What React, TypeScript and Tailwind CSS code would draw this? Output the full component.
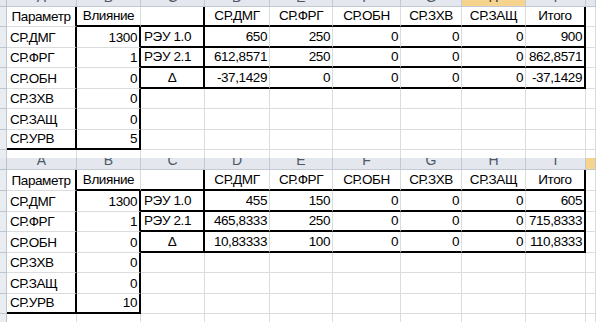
import React from "react";

type Cell = {
  text?: string;
  align?: "left" | "right" | "center";
  r?: boolean; // thick right edge
  b?: boolean; // thick bottom edge
};

type Row = { h: string; cells: Cell[] };

const COLS = "grid-cols-[7px_70px_64px_64px_65px_63px_68px_61px_64px_60px_1fr]";
const LETTERS = ["A", "B", "C", "D", "E", "F", "G", "H", "I", "J"];

const buildRows = (
  influence: string[],
  results: string[][],
  heights: string[]
): Row[] => {
  const params = ["СР.ДМГ", "СР.ФРГ", "СР.ОБН", "СР.ЗХВ", "СР.ЗАЩ", "СР.УРВ"];
  const labels = ["РЭУ 1.0", "РЭУ 2.1", "Δ"];
  const heads = ["СР.ДМГ", "СР.ФРГ", "СР.ОБН", "СР.ЗХВ", "СР.ЗАЩ", "Итого"];

  const rows: Row[] = [];
  rows.push({
    h: heights[0],
    cells: [
      { text: "Параметр", align: "center", r: true },
      { text: "Влияние", align: "center", b: true },
      { r: true, b: true },
      ...heads.map((t, i) => ({ text: t, align: "center" as const, b: true, r: i === 5 })),
      {},
    ],
  });

  params.forEach((p, i) => {
    const last = i === params.length - 1;
    const cells: Cell[] = [
      { text: p, align: "left", r: true, b: last },
      { text: influence[i], align: "right", r: true, b: last },
    ];
    if (i < 3) {
      cells.push({ text: labels[i], align: i === 2 ? "center" : "left", r: true, b: true });
      results[i].forEach((v, j) =>
        cells.push({ text: v, align: "right", b: true, r: j === 5 })
      );
    } else {
      for (let j = 0; j < 7; j++) cells.push({});
    }
    cells.push({});
    rows.push({ h: heights[i + 1], cells });
  });

  return rows;
};

const alignCls = {
  left: "justify-start pl-[3px]",
  right: "justify-end pr-[2px]",
  center: "justify-center",
};

const GridCell = ({ cell }: { cell: Cell }) => (
  <div
    className={`flex items-end pb-[3px] overflow-visible whitespace-nowrap border-[#dadcdd] border-r border-b ${
      cell.r ? "border-r-2 border-r-black" : ""
    } ${cell.b ? "border-b-2 border-b-black" : ""} ${alignCls[cell.align ?? "left"]}`}
  >
    {cell.text}
  </div>
);

const HeaderStrip = ({ visible, offset, selected }: { visible: string; offset: string; selected: string }) => (
  <div className={`${visible} overflow-hidden`}>
    <div className={`grid ${COLS} h-[20px] ${offset}`}>
      <div className="bg-[#e4e8ee] border-r border-b border-[#b9c0ca]" />
      {LETTERS.map((l) => (
        <div
          key={l}
          className={`flex items-center justify-center text-[14px] tracking-normal border-r border-b border-[#c3c9d2] ${
            l === selected ? "bg-[#f7d48e] text-[#3c3c3c]" : "bg-[#e4e8ee] text-[#4d5866]"
          }`}
        >
          {l === "J" ? "" : l}
        </div>
      ))}
    </div>
  </div>
);

const Sheet = ({ rows, tail }: { rows: Row[]; tail: string }) => (
  <div>
    {rows.map((row, ri) => (
      <div key={ri} className={`grid ${COLS} ${row.h}`}>
        <div className="bg-[#e9ecf1] border-r border-b border-[#bfc6d0]" />
        {row.cells.map((c, ci) => (
          <GridCell key={ci} cell={c} />
        ))}
      </div>
    ))}
    {/* partly visible row under the block */}
    <div className={`grid ${COLS} ${tail}`}>
      <div className="bg-[#e9ecf1] border-r border-[#bfc6d0]" />
      {LETTERS.map((l) => (
        <div key={l} className="border-r border-[#dadcdd]" />
      ))}
    </div>
  </div>
);

export default function App() {
  const first = buildRows(
    ["1300", "1", "0", "0", "0", "5"],
    [
      ["650", "250", "0", "0", "0", "900"],
      ["612,8571", "250", "0", "0", "0", "862,8571"],
      ["-37,1429", "0", "0", "0", "0", "-37,1429"],
    ],
    ["h-[20px]", "h-[21px]", "h-[20px]", "h-[21px]", "h-[20px]", "h-[21px]", "h-[20px]"]
  );

  const second = buildRows(
    ["1300", "1", "0", "0", "0", "10"],
    [
      ["455", "150", "0", "0", "0", "605"],
      ["465,8333", "250", "0", "0", "0", "715,8333"],
      ["10,83333", "100", "0", "0", "0", "110,8333"],
    ],
    ["h-[21px]", "h-[21px]", "h-[20px]", "h-[21px]", "h-[20px]", "h-[21px]", "h-[20px]"]
  );

  return (
    <div className="w-[596px] h-[322px] overflow-hidden bg-white text-black text-[13.5px] tracking-[-0.4px] leading-none font-['Liberation_Sans',Arial,sans-serif]">
      <HeaderStrip visible="h-[7px]" offset="-mt-[13px]" selected="H" />
      <Sheet rows={first} tail="h-[8px]" />
      <HeaderStrip visible="h-[12px]" offset="-mt-[8px]" selected="J" />
      <Sheet rows={second} tail="h-[10px]" />
    </div>
  );
}
